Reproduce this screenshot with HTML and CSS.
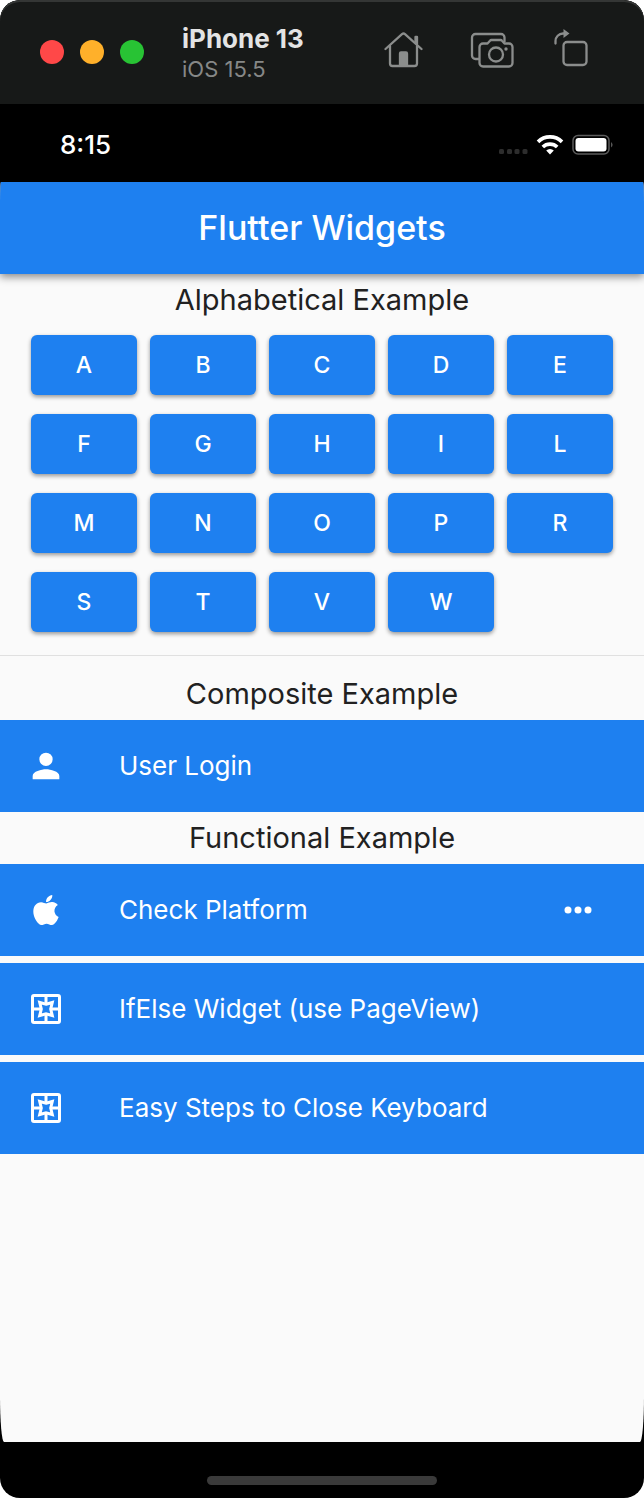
FILE: index.html
```html
<!DOCTYPE html>
<html lang="en">
<head>
<meta charset="utf-8">
<meta name="viewport" content="width=device-width, initial-scale=1">
<title>Flutter Widgets</title>
<link rel="stylesheet" href="styles.css">
</head>
<body>
<div class="simulator">
  <header class="titlebar">
    <div class="lights">
      <button class="light light-close" type="button" aria-label="Close"></button>
      <button class="light light-minimize" type="button" aria-label="Minimize"></button>
      <button class="light light-zoom" type="button" aria-label="Zoom"></button>
    </div>
    <div class="device">
      <div class="device-name">iPhone 13</div>
      <div class="device-os">iOS 15.5</div>
    </div>
    <div class="tools">
      <button class="tool" type="button" aria-label="Home">
        <svg width="44" height="38" viewBox="0 0 44 38" fill="none" stroke="currentColor" stroke-width="2.300" stroke-linecap="round" stroke-linejoin="round">
          <path d="M1.500 18 18 3.200a2.200 2.200 0 0 1 3 0L37.500 18"/>
          <path d="M6 15v17.500a2.500 2.500 0 0 0 2.500 2.500h22a2.500 2.500 0 0 0 2.500-2.500V15"/>
          <path d="M31.500 11V6H33v7z"/>
          <path d="M16 34V22.500a1 1 0 0 1 1-1h5a1 1 0 0 1 1 1V34z" fill="currentColor"/>
        </svg>
      </button>
      <button class="tool" type="button" aria-label="Screenshot">
        <svg width="46" height="38" viewBox="-2 0 46 38" fill="none" stroke="currentColor" stroke-width="2.300" stroke-linejoin="round">
          <path d="M9.500 28H5.500a3.500 3.500 0 0 1-3.500-3.500v-18A3.500 3.500 0 0 1 5.500 3h25.500a3.500 3.500 0 0 1 3.500 3.500V11"/>
          <path d="M13 12.500h4.500l2.500-2.700a2 2 0 0 1 1.500-.8h9a2 2 0 0 1 1.500.8l2.500 2.700H39a3.500 3.500 0 0 1 3.500 3.500v16a3.500 3.500 0 0 1-3.500 3.500H13A3.500 3.500 0 0 1 9.500 32V16a3.500 3.500 0 0 1 3.500-3.500z"/>
          <circle cx="26" cy="23.500" r="7"/>
          <circle cx="36" cy="18" r="1.700" fill="currentColor" stroke="none"/>
        </svg>
      </button>
      <button class="tool" type="button" aria-label="Rotate">
        <svg width="36" height="42" viewBox="0 0 36 42" fill="none" stroke="currentColor" stroke-width="2.300">
          <path d="M1.500 14.500V12A7.500 7.500 0 0 1 9 4.500h2" stroke-linecap="round"/>
          <path d="M9.500 0 15.500 4.500 9.500 9z" fill="currentColor" stroke="none"/>
          <rect x="9.500" y="13" width="23" height="23" rx="3.500"/>
        </svg>
      </button>
    </div>
  </header>

  <div class="statusbar">
    <time class="clock">8:15</time>
    <div class="indicators">
      <svg width="30" height="22" viewBox="0 0 30 22" fill="#2d2d2d" aria-label="No signal">
        <rect x="1" y="15" width="5" height="5" rx="1.500"/><rect x="9" y="15" width="5" height="5" rx="1.500"/><rect x="16.500" y="15" width="5" height="5" rx="1.500"/><rect x="24.500" y="15" width="5" height="5" rx="1.500"/>
      </svg>
      <svg width="28" height="22" viewBox="0 0 28 22" fill="none" stroke="#fff" stroke-width="3.700" aria-label="Wi-Fi">
        <path d="M2 7.800a17.300 17.300 0 0 1 24 0"/>
        <path d="M6.800 13a10.400 10.400 0 0 1 14.400 0"/>
        <path d="M14 20.500 10.200 16.500a5.500 5.500 0 0 1 7.600 0z" fill="#fff" stroke="none"/>
      </svg>
      <svg width="42" height="22" viewBox="0 0 42 22" aria-label="Battery">
        <rect x="1" y="1.500" width="36" height="18.500" rx="5" fill="none" stroke="#5b5b5b" stroke-width="1.500"/>
        <rect x="3.500" y="4" width="31" height="13.500" rx="3" fill="#fff"/>
        <path d="M39.200 8q2.600 2.800 0 5.600z" fill="#6b6b6b"/>
      </svg>
    </div>
  </div>

  <main class="screen">
    <div class="appbar"><h1 class="appbar-title">Flutter Widgets</h1></div>

    <h2 class="section-title">Alphabetical Example</h2>
    <div class="letters">
      <button class="letter" type="button">A</button>
      <button class="letter" type="button">B</button>
      <button class="letter" type="button">C</button>
      <button class="letter" type="button">D</button>
      <button class="letter" type="button">E</button>
      <button class="letter" type="button">F</button>
      <button class="letter" type="button">G</button>
      <button class="letter" type="button">H</button>
      <button class="letter" type="button">I</button>
      <button class="letter" type="button">L</button>
      <button class="letter" type="button">M</button>
      <button class="letter" type="button">N</button>
      <button class="letter" type="button">O</button>
      <button class="letter" type="button">P</button>
      <button class="letter" type="button">R</button>
      <button class="letter" type="button">S</button>
      <button class="letter" type="button">T</button>
      <button class="letter" type="button">V</button>
      <button class="letter" type="button">W</button>
    </div>
    <hr class="divider">

    <h2 class="section-title">Composite Example</h2>
    <div class="tiles">
      <button class="tile" type="button">
        <svg class="tile-icon" viewBox="0 0 24 24"><path d="M12 12a4 4 0 1 0 0-8 4 4 0 0 0 0 8zm0 2c-2.670 0-8 1.340-8 4v2h16v-2c0-2.660-5.330-4-8-4z"/></svg>
        <span>User Login</span>
      </button>
    </div>

    <h2 class="section-title">Functional Example</h2>
    <div class="tiles">
      <button class="tile" type="button">
        <svg class="tile-icon" viewBox="0 0 24 24"><path d="M17.050 20.280c-.98.95-2.050.8-3.080.35-1.090-.46-2.090-.48-3.240 0-1.440.62-2.200.44-3.060-.35C2.790 15.250 3.510 7.590 9.050 7.310c1.350.07 2.290.74 3.080.8 1.180-.24 2.310-.93 3.570-.84 1.510.12 2.650.72 3.400 1.800-3.120 1.870-2.380 5.980.48 7.130-.57 1.500-1.310 2.990-2.540 4.090zM12.030 7.250c-.15-2.230 1.660-4.070 3.740-4.250.29 2.580-2.340 4.500-3.740 4.250z"/></svg>
        <span>Check Platform</span>
        <svg class="tile-more" viewBox="0 0 28 8"><circle cx="4" cy="4" r="3.500"/><circle cx="14" cy="4" r="3.500"/><circle cx="24" cy="4" r="3.500"/></svg>
      </button>
      <button class="tile" type="button">
        <svg class="tile-icon tile-icon-line" viewBox="0 0 40 40">
          <rect x="6.500" y="6.500" width="27" height="27" rx="1.500"/>
          <path d="M20 7v8M20 25v8M7 20h8M25 20h8"/>
          <path d="M20 15.300 26.300 13.500 24.700 20 26.300 26.500 20 24.700 13.700 26.500 15.300 20 13.700 13.500z"/>
        </svg>
        <span>IfElse Widget (use PageView)</span>
      </button>
      <button class="tile" type="button">
        <svg class="tile-icon tile-icon-line" viewBox="0 0 40 40">
          <rect x="6.500" y="6.500" width="27" height="27" rx="1.500"/>
          <path d="M20 7v8M20 25v8M7 20h8M25 20h8"/>
          <path d="M20 15.300 26.300 13.500 24.700 20 26.300 26.500 20 24.700 13.700 26.500 15.300 20 13.700 13.500z"/>
        </svg>
        <span>Easy Steps to Close Keyboard</span>
      </button>
    </div>
  </main>

  <footer class="home-area"><div class="home-indicator"></div></footer>
</div>
</body>
</html>
```
FILE: styles.css
```css
* { box-sizing: border-box; }

body {
  margin: 0;
  background: #fff;
  font-family: Inter, "Liberation Sans", sans-serif;
}

button {
  border: 0;
  padding: 0;
  font: inherit;
  color: inherit;
}

svg { display: block; }

.simulator {
  display: flex;
  flex-direction: column;
  min-height: 100vh;
  overflow: hidden;
  border-radius: 20px;
  background: #000;
}

.titlebar {
  display: flex;
  align-items: center;
  padding: 0 54px 0 40px;
  height: 104px;
  border-radius: 20px 20px 0 0;
  background: #171918;
  box-shadow: inset 0 2px 0 #343635;
}

.lights { display: flex; gap: 16px; }

.light {
  width: 24px;
  height: 24px;
  border-radius: 50%;
}

.light-close { background: #ff4848; }
.light-minimize { background: #ffb02a; }
.light-zoom { background: #28c334; }

.device {
  margin-left: 38px;
  padding-top: 3px;
}

.device-name {
  color: #e4e4e4;
  font-size: 26px;
  font-weight: 700;
  line-height: 30px;
}

.device-os {
  color: #868887;
  font-size: 22px;
  line-height: 30px;
}

.tools {
  display: flex;
  align-items: center;
  gap: 40px;
  margin-left: auto;
  padding-bottom: 4px;
  color: #8b8d8c;
}

.tool { background: none; }

.statusbar {
  display: flex;
  align-items: center;
  justify-content: space-between;
  height: 78px;
  padding: 4px 30px 0 60px;
  color: #fff;
}

.clock {
  font-size: 26px;
  font-weight: 500;
  line-height: 30px;
}

.indicators { display: flex; gap: 8px; }

.screen {
  flex: 1;
  overflow: hidden;
  border-radius: 1px 1px 4px 4px / 24px 24px 46px 46px;
  background: #fafafa;
  color: #212121;
}

.appbar {
  display: flex;
  align-items: center;
  justify-content: center;
  height: 92px;
  background: #1e80f0;
  box-shadow: 0 3px 8px rgba(0, 0, 0, 0.45);
}

.appbar-title {
  margin: 0;
  color: #fff;
  font-size: 34px;
  font-weight: 500;
  line-height: 40px;
}

.section-title {
  margin: 0;
  padding: 6px 0;
  font-size: 29px;
  font-weight: 400;
  line-height: 40px;
  text-align: center;
}

.letters {
  display: grid;
  grid-template-columns: repeat(5, 1fr);
  gap: 19px 13px;
  padding: 9px 31px 23px;
}

.letter {
  height: 60px;
  border-radius: 6px;
  background: #1e80f0;
  box-shadow: 0 2px 4px rgba(0, 0, 0, 0.4);
  color: #fff;
  font-size: 23px;
  font-weight: 500;
}

.divider {
  height: 1px;
  margin: 0 0 12px;
  border: 0;
  background: #e0e0e0;
}

.tiles {
  display: flex;
  flex-direction: column;
  gap: 7px;
}

.tile {
  display: flex;
  align-items: center;
  gap: 53px;
  height: 92px;
  padding: 0 52px 0 26px;
  background: #1e80f0;
  color: #fff;
  font-size: 26px;
  line-height: 32px;
  text-align: left;
}

.tile-icon {
  width: 40px;
  height: 40px;
  fill: #fff;
}

.tile-icon-line {
  fill: none;
  stroke: #fff;
  stroke-width: 3px;
}

.tile-more {
  width: 28px;
  height: 8px;
  margin-left: auto;
  fill: #fff;
}

.home-area {
  display: flex;
  justify-content: center;
  height: 56px;
  padding-top: 34px;
}

.home-indicator {
  width: 230px;
  height: 9px;
  border-radius: 5px;
  background: #3a3a3a;
}
```
